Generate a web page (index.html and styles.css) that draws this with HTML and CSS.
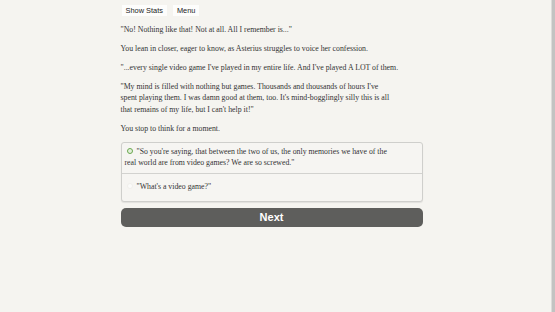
FILE: index.html
```html
<!DOCTYPE html>
<html lang="en">
<head>
    <meta charset="UTF-8">
    <title>Asterius</title>
    <link rel="stylesheet" href="styles.css">
</head>
<body>
    <div class="page">
        <main class="story">
            <!-- Top buttons -->
            <div class="toolbar">
                <button class="small-btn">Show Stats</button>
                <button class="small-btn">Menu</button>
            </div>

            <div class="text">
                <p>"No! Nothing like that! Not at all. All I remember is..."</p>
                <p>You lean in closer, eager to know, as Asterius struggles to voice her confession.</p>
                <p>"...every single video game I've played in my entire life. And I've played A LOT of them.</p>
                <p>"My mind is filled with nothing but games. Thousands and thousands of hours I've<br>spent playing them. I was damn good at them, too. It's mind-bogglingly silly this is all<br>that remains of my life, but I can't help it!"</p>
                <p>You stop to think for a moment.</p>
            </div>

            <!-- Choices -->
            <form class="choices">
                <label class="choice">
                    <span class="radio checked"></span>"So you're saying, that between the two of us, the only memories we have of the real world are from video games? We are so screwed."
                </label>
                <label class="choice">
                    <span class="radio"></span>"What's a video game?"
                </label>
            </form>

            <button class="next-btn">Next</button>
        </main>
        <div class="scrollbar"></div>
    </div>
</body>
</html>
```

FILE: styles.css
```css
* {
    box-sizing: border-box;
    margin: 0;
    padding: 0;
}

html, body {
    height: 100%;
}

body {
    background: #f5f4f0;
    color: #333;
    font-family: "Liberation Serif", "Times New Roman", serif;
    font-size: 7.8px;
}

.page {
    display: flex;
    height: 100%;
}

.story {
    width: 302px;
    margin: 0 auto;
    padding-top: 5px;
    position: relative;
    left: -4px;
}

/* Top buttons */
.toolbar {
    display: flex;
    gap: 6px;
    margin-left: 1px;
}

.small-btn {
    font-family: "Liberation Sans", Arial, sans-serif;
    font-size: 7.4px;
    color: #222;
    background: #fdfdfc;
    border: none;
    padding: 2px 4px;
    height: 11px;
    line-height: 7px;
}

/* Story text */
.text {
    margin-top: 3px;
    max-width: 292px;
}

.text p {
    line-height: 11.5px;
    margin: 7.5px 0;
}

/* Choices */
.choices {
    margin-top: 3px;
    border: 1px solid #cfcfcc;
    border-radius: 3px;
    background: #f6f5f2;
    box-shadow: 0 1px 1px rgba(0, 0, 0, 0.08);
}

.choice {
    display: block;
    padding: 3px 28px 4px 3px;
    line-height: 11.5px;
    min-height: 30px;
}

.choice + .choice {
    border-top: 1px solid #d2d2cf;
    padding-top: 7px;
    min-height: 28px;
}

.radio {
    display: inline-block;
    width: 6px;
    height: 6px;
    margin: 0 4px 0 2px;
    vertical-align: -0.5px;
    border-radius: 50%;
    border: 1px solid #f0efec;
    background: #fbfbfa;
}

.radio.checked {
    border: 1.5px solid #6aa84f;
    background: #e4f0dc;
}

/* Next button */
.next-btn {
    display: block;
    width: 100%;
    margin-top: 6px;
    height: 19px;
    border: none;
    border-radius: 5px;
    background: #5e5e5c;
    color: #fff;
    font-family: "Liberation Sans", Arial, sans-serif;
    font-weight: bold;
    font-size: 11px;
}

.scrollbar {
    width: 4px;
    flex: none;
    border-left: 1px solid #dcdcda;
    background: #c3c3c2;
}
```
